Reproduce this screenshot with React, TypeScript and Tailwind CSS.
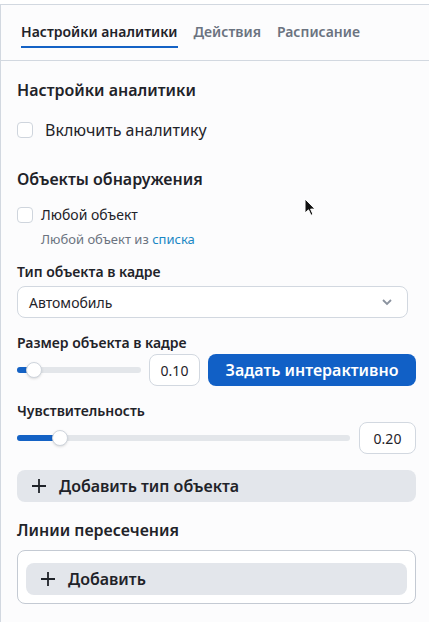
import React from "react";

const font = { fontFamily: '"Noto Sans", "Open Sans", sans-serif' };

function Plus() {
  return (
    <svg width="16" height="16" viewBox="0 0 16 16" className="shrink-0">
      <path d="M8 1v14M1 8h14" stroke="#1f2329" strokeWidth="1.8" />
    </svg>
  );
}

function Slider({ pct }: { pct: number }) {
  return (
    <div className="relative flex-1 h-[16px] flex items-center">
      <div className="w-full h-[6px] rounded-full bg-[#e3e6ea]" />
      <div className="absolute left-0 h-[6px] rounded-full bg-[#1462c5]" style={{ width: `${pct}%` }} />
      <div
        className="absolute w-[16px] h-[16px] rounded-full bg-white border border-[#cfd5dd] shadow-sm"
        style={{ left: `calc(${pct}% - 8px)` }}
      />
    </div>
  );
}

export default function App() {
  return (
    <div className="relative w-[429px] h-[622px] bg-white overflow-hidden text-[#1f2329]" style={font}>
      <div className="mt-[4px] h-[618px] border-t border-l border-[#d2d8e0] bg-[#fcfcfd]">
        <div className="flex gap-4 pl-[20px] pt-[17px] pb-[12px] border-b border-[#d2d8e0]">
          <div className="pb-[4px] border-b-2 border-[#1462c5] text-[14px] leading-[20px] font-semibold text-[#1f2329]">
            Настройки аналитики
          </div>
          <div className="pb-[4px] border-b-2 border-transparent text-[14px] leading-[20px] font-semibold text-[#6b7380]">
            Действия
          </div>
          <div className="pb-[4px] border-b-2 border-transparent text-[14px] leading-[20px] font-semibold text-[#6b7380]">
            Расписание
          </div>
        </div>

        <div className="pl-[16px] pr-[13px] flex flex-col">
          <div className="mt-[17px] text-[16px] leading-[24px] font-semibold">Настройки аналитики</div>
          <div className="mt-[16px] flex items-center h-[24px]">
            <div className="w-[16px] h-[16px] rounded-[4px] border border-[#cfd5dd] bg-white" />
            <span className="ml-[12px] text-[16px] leading-[24px]">Включить аналитику</span>
          </div>

          <div className="mt-[25px] text-[16px] leading-[24px] font-semibold">Объекты обнаружения</div>
          <div className="mt-[14px] flex items-center h-[20px]">
            <div className="w-[16px] h-[16px] rounded-[4px] border border-[#cfd5dd] bg-white" />
            <span className="ml-[8px] text-[14px] leading-[20px]">Любой объект</span>
          </div>
          <div className="mt-[5px] ml-[24px] text-[13px] leading-[18px] text-[#6b7380]">
            Любой объект из <span className="text-[#1a87c4]">списка</span>
          </div>

          <div className="mt-[14px] text-[14px] leading-[20px] font-semibold">Тип объекта в кадре</div>
          <div className="mt-[4px] mr-[8px] h-[32px] rounded-lg border border-[#d2d8e0] bg-white flex items-center justify-between pl-[11px] pr-[14px]">
            <span className="text-[14px]">Автомобиль</span>
            <svg width="12" height="8" viewBox="0 0 12 8">
              <path d="M2 2l4 4 4-4" stroke="#8a929e" strokeWidth="1.8" fill="none" />
            </svg>
          </div>

          <div className="mt-[15px] text-[14px] leading-[20px] font-semibold">Размер объекта в кадре</div>
          <div className="mt-[1px] flex items-center gap-[8px] h-[32px]">
            <Slider pct={13.5} />
            <div className="w-[51px] h-[32px] rounded-lg border border-[#d2d8e0] bg-white flex items-center justify-center text-[14px]">
              0.10
            </div>
            <div className="w-[208px] h-[32px] rounded-lg bg-[#1160c6] text-white text-[16px] font-semibold flex items-center justify-center">
              Задать интерактивно
            </div>
          </div>

          <div className="mt-[15px] text-[14px] leading-[20px] font-semibold">Чувствительность</div>
          <div className="mt-[1px] flex items-center gap-[9px] h-[32px]">
            <Slider pct={12.8} />
            <div className="w-[57px] h-[32px] rounded-lg border border-[#d2d8e0] bg-white flex items-center justify-center text-[14px]">
              0.20
            </div>
          </div>

          <div className="mt-[16px] h-[32px] rounded-lg bg-[#e3e6eb] flex items-center pl-[14px] gap-[12px]">
            <Plus />
            <span className="text-[16px] font-semibold">Добавить тип объекта</span>
          </div>

          <div className="mt-[16px] text-[16px] leading-[24px] font-semibold">Линии пересечения</div>
          <div className="mt-[8px] rounded-lg border border-[#c4cad3] bg-white px-[8px] pt-[12px] pb-[8px]">
            <div className="h-[32px] rounded-lg bg-[#e3e6eb] flex items-center pl-[14px] gap-[12px]">
              <Plus />
              <span className="text-[16px] font-semibold">Добавить</span>
            </div>
          </div>
        </div>
      </div>

      <svg className="absolute left-[304px] top-[198px]" width="14" height="20" viewBox="0 0 14 20">
        <path d="M1 1v14l3.5-3.2 2.5 5.5 2-0.9-2.4-5.3H11z" fill="#111" stroke="#fff" strokeWidth="1" />
      </svg>
    </div>
  );
}
